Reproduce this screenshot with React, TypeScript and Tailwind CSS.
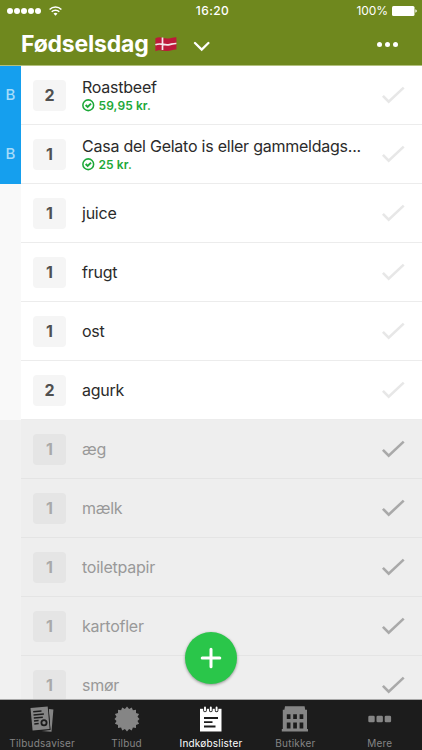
import React from 'react';

type Item = {
    id: number;
    count: number;
    name: string;
    price?: string;
    store?: string;
    done?: boolean;
};

const items: Item[] = [
    { id: 1, count: 2, name: 'Roastbeef', price: '59,95 kr.', store: 'B' },
    { id: 2, count: 1, name: 'Casa del Gelato is eller gammeldags...', price: '25 kr.', store: 'B' },
    { id: 3, count: 1, name: 'juice' },
    { id: 4, count: 1, name: 'frugt' },
    { id: 5, count: 1, name: 'ost' },
    { id: 6, count: 2, name: 'agurk' },
    { id: 7, count: 1, name: 'æg', done: true },
    { id: 8, count: 1, name: 'mælk', done: true },
    { id: 9, count: 1, name: 'toiletpapir', done: true },
    { id: 10, count: 1, name: 'kartofler', done: true },
    { id: 11, count: 1, name: 'smør', done: true },
];

export default function App() {
    return (
        <div className="relative flex h-[750px] w-[422px] flex-col overflow-hidden bg-[#eeeeee] font-['Inter',sans-serif]">
            <Header />

            {/* Shopping list */}
            <main className="min-h-0 flex-1 overflow-hidden">
                {items.map((item) => (
                    <ItemRow key={item.id} item={item} />
                ))}
            </main>

            {/* Add button */}
            <button className="absolute top-[632px] left-[185px] flex h-[52px] w-[52px] items-center justify-center rounded-full bg-[#2ac64a] shadow-[0_1px_3px_rgba(0,0,0,0.4)]">
                <svg className="h-[22px] w-[22px]" viewBox="0 0 22 22" stroke="#fff" strokeWidth="3" strokeLinecap="round">
                    <path d="M11 2.2v17.6M2.2 11h17.6" />
                </svg>
            </button>

            <TabBar />
        </div>
    );
}

function Header() {
    return (
        <header className="h-[66px] shrink-0 border-b border-[#b3c07e] bg-[#6f881e] text-white">
            {/* Status bar */}
            <div className="grid h-[22px] grid-cols-3 items-center pr-[5px] pl-[7px]">
                <div className="flex items-center">
                    <div className="flex gap-[1px]">
                        {[0, 1, 2, 3, 4].map((dot) => (
                            <span key={dot} className="h-[6px] w-[6px] rounded-full bg-white" />
                        ))}
                    </div>
                    <svg className="ml-2 h-[10px] w-[13px]" viewBox="0 0 13 10" fill="none" stroke="#fff" strokeWidth="1.5">
                        <path d="M.6 3.5a8.4 8.4 0 0 1 11.8 0M2.7 5.7a5.4 5.4 0 0 1 7.6 0" />
                        <path d="M6.5 9.7 4.5 7.6a2.9 2.9 0 0 1 4 0z" fill="#fff" stroke="none" />
                    </svg>
                </div>
                <span className="pl-[1px] text-center text-[12px] font-medium tracking-[0.4px]">16:20</span>
                <div className="flex items-center justify-end gap-[4px]">
                    <span className="text-[12px] tracking-[-0.1px]">100%</span>
                    <svg className="h-[10px] w-[25px]" viewBox="0 0 25 10" fill="#fff">
                        <rect width="22.5" height="10" rx="1.5" />
                        <path d="M23.4 3.2q1.4.5 1.4 1.8t-1.4 1.8z" />
                    </svg>
                </div>
            </div>

            {/* Title */}
            <div className="flex h-[43px] items-center pr-[24px] pl-[21px]">
                <h1 className="w-[128px] pt-[1px] text-[23px] leading-[43px] font-bold tracking-[-0.2px] whitespace-nowrap">Fødselsdag</h1>
                <DanishFlag />
                <svg className="mt-[5px] ml-[16px] h-[11px] w-[17px]" viewBox="0 0 17 11" fill="none" stroke="#fff" strokeWidth="2.3" strokeLinecap="round">
                    <path d="m2 2 6.7 6.6L15.4 2" />
                </svg>
                <div className="mt-[2px] ml-auto flex gap-[2.5px]">
                    <span className="h-[5.5px] w-[5.5px] rounded-full bg-white" />
                    <span className="h-[5.5px] w-[5.5px] rounded-full bg-white" />
                    <span className="h-[5.5px] w-[5.5px] rounded-full bg-white" />
                </div>
            </div>
        </header>
    );
}

function ItemRow({ item }: { item: Item }) {
    const stripColor = item.store ? 'bg-[#159fee]' : item.done ? 'bg-[#f1f1f1]' : 'bg-[#f9f9f9]';

    return (
        <div className="flex h-[59px]">
            <div className={`flex w-[21px] items-center justify-center text-[15px] font-medium text-[#a5dcfa] ${stripColor}`}>
                {item.store}
            </div>
            <div
                className={`flex min-w-0 flex-1 items-center border-b pr-[17px] pl-[12px] ${
                    item.done ? 'border-[#e4e4e4] bg-[#eeeeee]' : 'border-[#ececec] bg-white'
                }`}
            >
                <span
                    className={`flex h-[31px] w-[33px] shrink-0 items-center justify-center rounded-[4px] text-[16px] font-bold ${
                        item.done ? 'bg-[#e5e5e5] text-[#a9a9a9]' : 'bg-[#f5f5f5] text-[#505050]'
                    }`}
                >
                    {item.count}
                </span>
                <div className={`ml-4 min-w-0 flex-1 ${item.price ? 'pt-[2px]' : ''}`}>
                    <div
                        className={`text-[16px] tracking-[-0.24px] whitespace-nowrap ${item.price ? 'leading-[19px]' : 'leading-[20px]'} ${
                            item.done ? 'text-[#999999]' : 'text-[#2b2b2b]'
                        }`}
                    >
                        {item.name}
                    </div>
                    {item.price && (
                        <div className="flex h-[17px] items-center gap-[4px] text-[12px] font-semibold tracking-[0.1px] text-[#1da838]">
                            <svg className="h-[12.5px] w-[12.5px]" viewBox="0 0 13 13" fill="none" stroke="currentColor">
                                <circle cx="6.5" cy="6.5" r="5.6" strokeWidth="1.6" />
                                <path d="m3.8 6.2 2.1 2.1 3.5-3.5" strokeWidth="2" />
                            </svg>
                            {item.price}
                        </div>
                    )}
                </div>
                <svg
                    className={`h-[18px] w-[24px] shrink-0 ${item.done ? 'text-[#a9a9a9]' : 'text-[#e7e7e7]'}`}
                    viewBox="0 0 24 18"
                    fill="none"
                    stroke="currentColor"
                    strokeWidth="2.6"
                >
                    <path d="m1.9 9.8 5.8 5.9L22.7 1.6" />
                </svg>
            </div>
        </div>
    );
}

function TabBar() {
    return (
        <nav className="grid h-[51px] shrink-0 grid-cols-5 border-t border-[#a8a8a8] bg-[#1c1c1c]">
            <Tab label="Tilbudsaviser">
                <path d="m20.8 4 4.6.5-1.9 22.3-10.2-.9 9.2-.8z" />
                <path d="m2.5 3.1 17.2-1.6 1.9 22.6-17 1.5z" stroke="#1c1c1c" strokeWidth="1.4" paintOrder="stroke" />
                <g stroke="#1c1c1c" strokeWidth="1.5" fill="none">
                    <path d="m5.2 6.8 8.3-.7M5.5 10l10.4-.9M5.8 13l9-.7M6 16l4.6-.4M6.3 19l4.4-.4" />
                    <circle cx="16" cy="17.8" r="2.6" strokeWidth="1.8" />
                </g>
            </Tab>
            <Tab label="Tilbud">
                <path d="m14 1.6 2.1 2.4 2.7-1.6 1.1 2.9 3.1-.5v3.1l3.1 1.1-1.6 2.7L26.5 14l-2 2.1 1.6 2.7-3.1 1.1v3.1l-3.1-.5-1.1 3.1-2.7-1.6L14 26.4 11.9 24l-2.7 1.6-1.1-3.1-3.1.5v-3.1l-3.1-1.1 1.6-2.7L1.5 14l2-2.3L1.9 9 5 7.9V4.8l3.1.5 1.1-2.9L11.9 4z" />
            </Tab>
            <Tab label="Indkøbslister" active>
                <path d="M3 3.8h21.5v22.7H3z" />
                <g stroke="#1c1c1c" strokeWidth="3.6" strokeLinecap="round">
                    <path d="M8 2.4v3M13.8 2.4v3M19.6 2.4v3" />
                </g>
                <g stroke="#fff" strokeWidth="1.9" strokeLinecap="round">
                    <path d="M8 2.4v3M13.8 2.4v3M19.6 2.4v3" />
                </g>
                <path d="M7 13h14M7 17.2h8.5M7 21.5h11.5" stroke="#1c1c1c" strokeWidth="1.8" />
            </Tab>
            <Tab label="Butikker">
                <path d="M4 1.2h19.6l.6 3.5H26v19.2h1v2.7H.8v-2.7h1V4.7h1.6z" />
                <path d="M5.8 9.2h3.7v4.8H5.8zM12.2 9.2h3.7v4.8h-3.7zM18.6 9.2h3.7v4.8h-3.7zM5.8 17.5h3.7v6H5.8zM12.2 17.5h3.7v6h-3.7zM18.6 17.5h3.7v6h-3.7z" fill="#1c1c1c" />
            </Tab>
            <Tab label="Mere">
                <rect x="2.3" y="10.8" width="6.4" height="6.4" rx="1.3" />
                <rect x="10.5" y="10.8" width="6.4" height="6.4" rx="1.3" />
                <rect x="18.7" y="10.8" width="6.4" height="6.4" rx="1.3" />
            </Tab>
        </nav>
    );
}

function Tab({ label, active, children }: {
    label: string;
    active?: boolean;
    children: React.ReactNode;
}) {
    return (
        <button className={`flex flex-col items-center justify-start pt-[5px] ${active ? 'text-white' : 'text-[#858585]'}`}>
            <svg className="h-[28px] w-[28px]" viewBox="0 0 28 28" fill="currentColor">
                {children}
            </svg>
            <span className="mt-[4px] text-[10px] leading-[12px] tracking-[0.2px]">{label}</span>
        </button>
    );
}

function DanishFlag() {
    return (
        <svg className="ml-[6px] h-[16px] w-[22px]" viewBox="0 0 22 16">
            <path d="M.4 2.2C6-.2 9 3.2 13.5 2.5c3-.3 5-1.5 7.9-1.3v12.4c-3.1-.3-5.4 1.5-8.9 1.5-4.1.1-7.2-2.2-12.1.1z" fill="#bd1a3b" />
            <path d="M7.5 1.5v12.6M.4 8.8c5.3-2.3 8.5.7 12.9 0 3-.4 5.2-1.5 8.1-1.3" fill="none" stroke="#f4e9ed" strokeWidth="1.7" />
        </svg>
    );
}
